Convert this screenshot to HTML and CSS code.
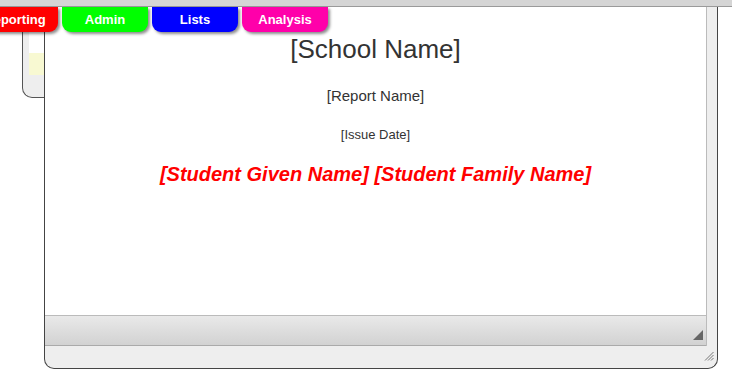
FILE: index.html
```html
<!DOCTYPE html>
<html lang="en">
<head>
    <meta charset="UTF-8">
    <title>Report Preview</title>
    <link rel="stylesheet" href="styles.css">
</head>
<body>
    <div class="topbar"></div>
    <div class="stage">
        <nav class="tabs">
            <div class="tab tab-red">Reporting</div>
            <div class="tab tab-green">Admin</div>
            <div class="tab tab-blue">Lists</div>
            <div class="tab tab-pink">Analysis</div>
        </nav>

        <div class="side-panel">
            <div class="side-row side-white"></div>
            <div class="side-row side-yellow"></div>
        </div>

        <div class="dialog">
            <div class="pane">
                <div class="doc">
                    <h1 class="school">[School Name]</h1>
                    <p class="report">[Report Name]</p>
                    <p class="issue">[Issue Date]</p>
                    <h2 class="student">[Student Given Name] [Student Family Name]</h2>
                </div>
                <div class="toolbar">
                    <svg class="corner" width="10" height="10" viewBox="0 0 10 10">
                        <polygon points="10,0 10,10 0,10" fill="#666"/>
                    </svg>
                </div>
            </div>
            <div class="dialog-foot">
                <svg class="grip" width="10" height="10" viewBox="0 0 10 10">
                    <line x1="9.5" y1="1" x2="1" y2="9.5" stroke="#777" stroke-width="1"/>
                    <line x1="9.5" y1="4" x2="4" y2="9.5" stroke="#777" stroke-width="1"/>
                    <line x1="9.5" y1="7" x2="7" y2="9.5" stroke="#777" stroke-width="1"/>
                </svg>
            </div>
        </div>
    </div>
</body>
</html>
```

FILE: styles.css
```css
body {
    margin: 0;
    background: #fff;
    font-family: "Liberation Sans", Arial, sans-serif;
    color: #333;
    overflow: hidden;
}

.topbar {
    height: 6px;
    background: #d5d5d5;
    border-bottom: 1px solid #9a9a9a;
}

.stage {
    position: relative;
    display: flex;
    align-items: flex-start;
}

/* tabs hang over the dialog */
.tabs {
    position: absolute;
    top: 0;
    left: -28px;
    display: flex;
    gap: 4px;
    z-index: 2;
}

.tab {
    width: 86px;
    height: 25px;
    line-height: 25px;
    text-align: center;
    color: #fff;
    font-size: 13px;
    font-weight: bold;
    border-radius: 0 0 9px 9px;
    box-shadow: 2px 2px 3px rgba(0, 0, 0, 0.45);
}

.tab-red { background: #ff0000; }
.tab-green { background: #00ff00; }
.tab-blue { background: #0000ff; }
.tab-pink { background: #ff00aa; }

.side-panel {
    box-sizing: border-box;
    margin-left: 22px;
    width: 22px;
    height: 91px;
    padding-left: 6px;
    background: #eeeeee;
    border-left: 1px solid #555;
    border-bottom: 1px solid #555;
    border-bottom-left-radius: 10px;
}

.side-white {
    height: 46px;
    background: #fff;
}

.side-yellow {
    height: 22px;
    background: #f8f9d2;
}

.dialog {
    box-sizing: border-box;
    width: 674px;
    height: 362px;
    display: flex;
    flex-direction: column;
    padding-right: 10px;
    background: #eeeeee;
    border: 1px solid #444;
    border-top: none;
    border-radius: 0 0 10px 10px;
}

.pane {
    flex: 1;
    display: flex;
    flex-direction: column;
    border-right: 1px solid #bbb;
}

.doc {
    flex: 1;
    background: #fff;
    text-align: center;
    padding-top: 27px;
}

.school {
    margin: 0;
    font-size: 26px;
    font-weight: normal;
    line-height: 30px;
}

.report {
    margin: 23px 0 0;
    font-size: 15px;
    line-height: 18px;
}

.issue {
    margin: 22px 0 0;
    font-size: 13px;
    line-height: 16px;
}

.student {
    margin: 19px 0 0;
    font-size: 20px;
    font-style: italic;
    font-weight: bold;
    color: #ff0000;
    line-height: 24px;
}

.toolbar {
    height: 31px;
    display: flex;
    justify-content: flex-end;
    align-items: flex-end;
    padding: 0 3px 5px 0;
    box-sizing: border-box;
    background: linear-gradient(#e9e9e9, #d2d2d2);
    border-top: 1px solid #bbb;
    border-bottom: 1px solid #aaa;
}

.dialog-foot {
    height: 22px;
    display: flex;
    justify-content: flex-end;
    align-items: flex-end;
    padding: 0 0 7px 0;
    margin-right: -7px;
    box-sizing: border-box;
}
```
